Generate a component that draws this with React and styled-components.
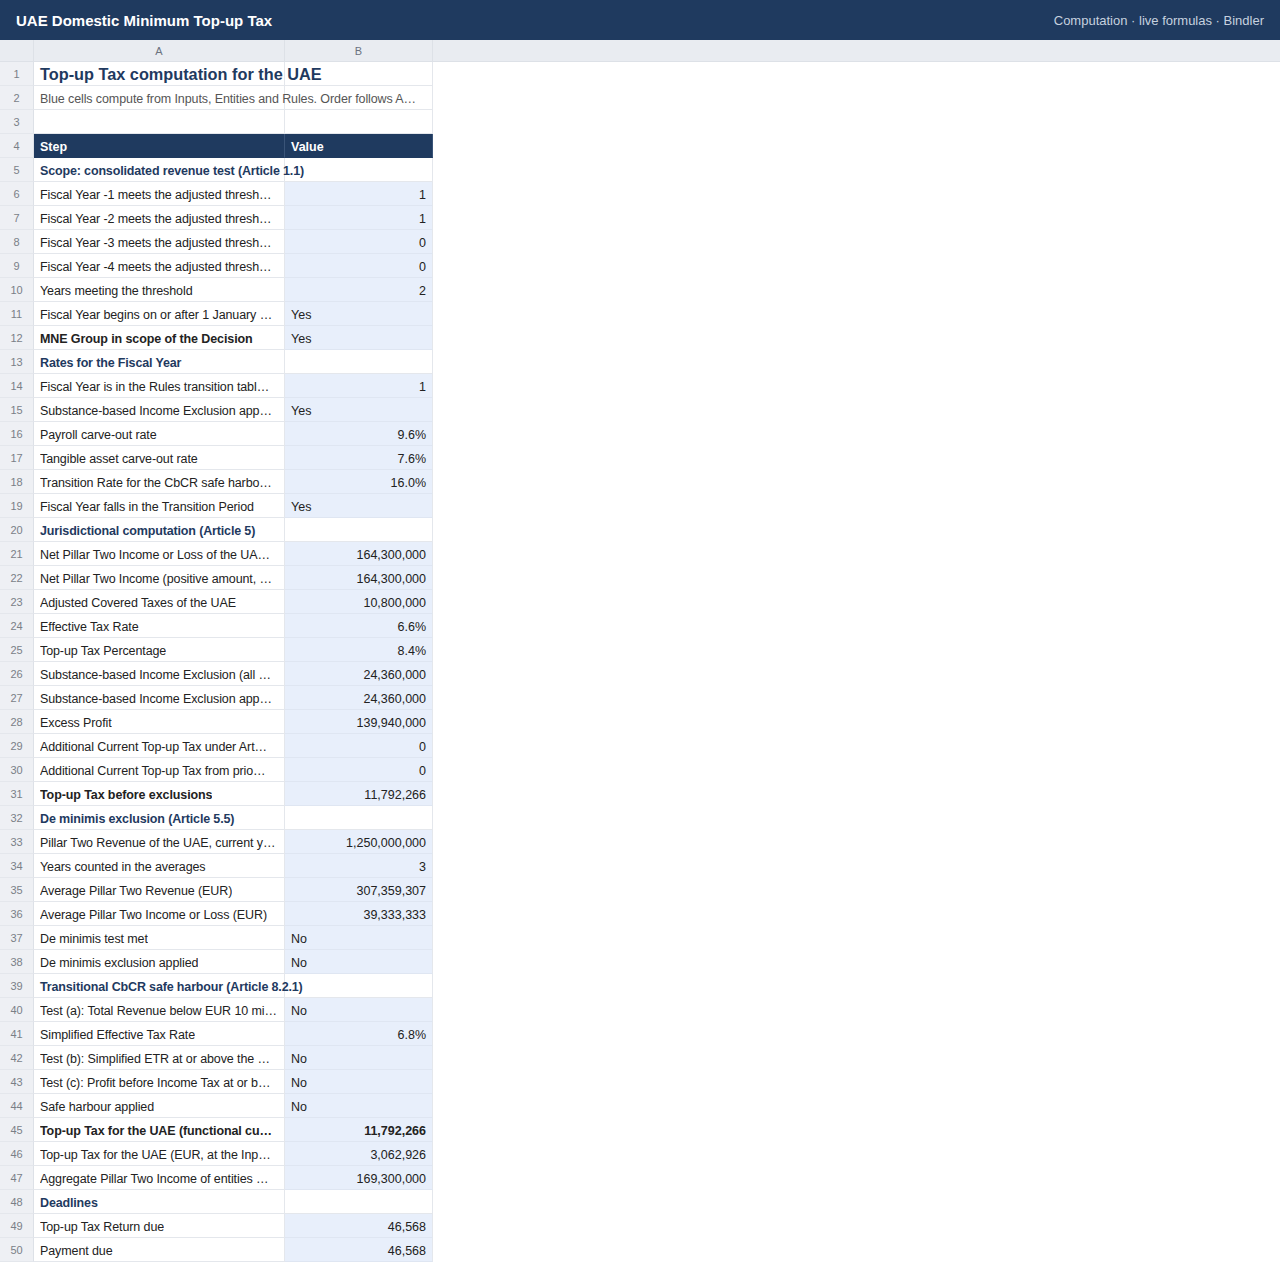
import React from "react";
import styled, { createGlobalStyle, css } from "styled-components";

const Global = createGlobalStyle`
  html, body { margin: 0; padding: 0; background: #ffffff; }
  body { font-family: "Liberation Sans", Arial, Helvetica, sans-serif; color: #222; }
  * { box-sizing: border-box; }
`;

const NAVY = "#1f3a5f";

const Page = styled.div`
  width: 1280px;
  min-height: 1270px;
  background: #fff;
`;

const TopBar = styled.header`
  height: 40px;
  background: ${NAVY};
  display: flex;
  align-items: center;
  justify-content: space-between;
  padding: 0 16px;
`;

const AppTitle = styled.div`
  color: #fff;
  font-weight: 700;
  font-size: 15px;
`;

const AppMeta = styled.div`
  color: #c6d1df;
  font-size: 13px;
`;

const ColBar = styled.div`
  display: flex;
  height: 22px;
  background: #e9ecf1;
  border-bottom: 1px solid #dde1e7;
`;

const ColHead = styled.div`
  width: ${(p) => p.$w}px;
  flex: none;
  border-right: 1px solid #dde1e7;
  display: flex;
  align-items: center;
  justify-content: center;
  font-size: 11px;
  color: #6b7280;
`;

const Sheet = styled.div`
  display: grid;
  grid-template-columns: 34px 251px 148px;
  grid-auto-rows: 24px;
  width: 433px;
`;

const RowNum = styled.div`
  background: #eef0f4;
  border-right: 1px solid #dde1e7;
  border-bottom: 1px solid #e4e7ec;
  display: flex;
  align-items: center;
  justify-content: center;
  padding-top: 1px;
  font-size: 11px;
  color: #7a7f87;
`;

const Cell = styled.div`
  position: relative;
  border-right: 1px solid #e4e7ec;
  border-bottom: 1px solid #e4e7ec;
  display: flex;
  align-items: center;
  padding: 2px 6px 0;
  font-size: 12.5px;
  color: #222;
  white-space: nowrap;
  min-width: 0;
  background: transparent;
  justify-content: ${(p) => (p.$right ? "flex-end" : "flex-start")};
  font-weight: ${(p) => (p.$bold ? 700 : 400)};
  ${(p) =>
    p.$blue &&
    css`
      background: #e8effb;
      border-bottom-color: #dfe6f2;
    `}
  ${(p) =>
    p.$head &&
    css`
      background: ${NAVY};
      color: #fff;
      font-weight: 700;
      border-right-color: #3a5478;
      border-bottom-color: ${NAVY};
    `}
  ${(p) =>
    p.$section &&
    css`
      color: ${NAVY};
      font-weight: 700;
      letter-spacing: -0.15px;
    `}
  ${(p) =>
    p.$title &&
    css`
      color: ${NAVY};
      font-weight: 700;
      font-size: 16.3px;
      padding-top: 2px;
    `}
  ${(p) =>
    p.$note &&
    css`
      color: #555;
    `}
`;

const Text = styled.span`
  display: block;
  flex: none;
  overflow: ${(p) => (p.$spill ? "visible" : "hidden")};
  text-overflow: ellipsis;
  white-space: nowrap;
  letter-spacing: ${(p) => (p.$spill ? "inherit" : "-0.1px")};
  width: ${(p) => (p.$width ? `${p.$width}px` : "auto")};
  max-width: ${(p) => (p.$width ? `${p.$width}px` : "100%")};
  position: relative;
  z-index: 1;
`;

const rows = [
  { t: "title", a: "Top-up Tax computation for the UAE" },
  { t: "note", a: "Blue cells compute from Inputs, Entities and Rules. Order follows A…" },
  { t: "blank" },
  { t: "head", a: "Step", b: "Value" },
  { t: "section", a: "Scope: consolidated revenue test (Article 1.1)" },
  { a: "Fiscal Year -1 meets the adjusted thresh…", b: "1", n: true },
  { a: "Fiscal Year -2 meets the adjusted thresh…", b: "1", n: true },
  { a: "Fiscal Year -3 meets the adjusted thresh…", b: "0", n: true },
  { a: "Fiscal Year -4 meets the adjusted thresh…", b: "0", n: true },
  { a: "Years meeting the threshold", b: "2", n: true },
  { a: "Fiscal Year begins on or after 1 January …", b: "Yes" },
  { a: "MNE Group in scope of the Decision", b: "Yes", bold: true },
  { t: "section", a: "Rates for the Fiscal Year" },
  { a: "Fiscal Year is in the Rules transition tabl…", b: "1", n: true },
  { a: "Substance-based Income Exclusion app…", b: "Yes" },
  { a: "Payroll carve-out rate", b: "9.6%", n: true },
  { a: "Tangible asset carve-out rate", b: "7.6%", n: true },
  { a: "Transition Rate for the CbCR safe harbo…", b: "16.0%", n: true },
  { a: "Fiscal Year falls in the Transition Period", b: "Yes" },
  { t: "section", a: "Jurisdictional computation (Article 5)" },
  { a: "Net Pillar Two Income or Loss of the UA…", b: "164,300,000", n: true },
  { a: "Net Pillar Two Income (positive amount, …", b: "164,300,000", n: true },
  { a: "Adjusted Covered Taxes of the UAE", b: "10,800,000", n: true },
  { a: "Effective Tax Rate", b: "6.6%", n: true },
  { a: "Top-up Tax Percentage", b: "8.4%", n: true },
  { a: "Substance-based Income Exclusion (all …", b: "24,360,000", n: true },
  { a: "Substance-based Income Exclusion app…", b: "24,360,000", n: true },
  { a: "Excess Profit", b: "139,940,000", n: true },
  { a: "Additional Current Top-up Tax under Art…", b: "0", n: true },
  { a: "Additional Current Top-up Tax from prio…", b: "0", n: true },
  { a: "Top-up Tax before exclusions", b: "11,792,266", n: true, bold: true },
  { t: "section", a: "De minimis exclusion (Article 5.5)" },
  { a: "Pillar Two Revenue of the UAE, current y…", b: "1,250,000,000", n: true },
  { a: "Years counted in the averages", b: "3", n: true },
  { a: "Average Pillar Two Revenue (EUR)", b: "307,359,307", n: true },
  { a: "Average Pillar Two Income or Loss (EUR)", b: "39,333,333", n: true },
  { a: "De minimis test met", b: "No" },
  { a: "De minimis exclusion applied", b: "No" },
  { t: "section", a: "Transitional CbCR safe harbour (Article 8.2.1)" },
  { a: "Test (a): Total Revenue below EUR 10 mi…", b: "No" },
  { a: "Simplified Effective Tax Rate", b: "6.8%", n: true },
  { a: "Test (b): Simplified ETR at or above the …", b: "No" },
  { a: "Test (c): Profit before Income Tax at or b…", b: "No" },
  { a: "Safe harbour applied", b: "No" },
  { a: "Top-up Tax for the UAE (functional cu…", b: "11,792,266", n: true, bold: true, boldB: true },
  { a: "Top-up Tax for the UAE (EUR, at the Inp…", b: "3,062,926", n: true },
  { a: "Aggregate Pillar Two Income of entities …", b: "169,300,000", n: true },
  { t: "section", a: "Deadlines" },
  { a: "Top-up Tax Return due", b: "46,568", n: true },
  { a: "Payment due", b: "46,568", n: true },
];

function SheetRow({ r, i }) {
  const num = <RowNum>{i + 1}</RowNum>;
  if (r.t === "title" || r.t === "section") {
    return (
      <>
        {num}
        <Cell $title={r.t === "title"} $section={r.t === "section"}>
          <Text $spill>{r.a}</Text>
        </Cell>
        <Cell />
      </>
    );
  }
  if (r.t === "note") {
    return (
      <>
        {num}
        <Cell $note>
          <Text $width={390}>{r.a}</Text>
        </Cell>
        <Cell />
      </>
    );
  }
  if (r.t === "blank") {
    return (
      <>
        {num}
        <Cell />
        <Cell />
      </>
    );
  }
  if (r.t === "head") {
    return (
      <>
        {num}
        <Cell $head>{r.a}</Cell>
        <Cell $head>{r.b}</Cell>
      </>
    );
  }
  return (
    <>
      {num}
      <Cell $bold={r.bold}>
        <Text>{r.a}</Text>
      </Cell>
      <Cell $blue $right={r.n} $bold={r.boldB}>
        {r.b}
      </Cell>
    </>
  );
}

export default function App() {
  return (
    <Page>
      <Global />
      <TopBar>
        <AppTitle>UAE Domestic Minimum Top-up Tax</AppTitle>
        <AppMeta>Computation · live formulas · Bindler</AppMeta>
      </TopBar>
      <ColBar>
        <ColHead $w={34} />
        <ColHead $w={251}>A</ColHead>
        <ColHead $w={148}>B</ColHead>
      </ColBar>
      <Sheet>
        {rows.map((r, i) => (
          <SheetRow key={i} r={r} i={i} />
        ))}
      </Sheet>
    </Page>
  );
}
